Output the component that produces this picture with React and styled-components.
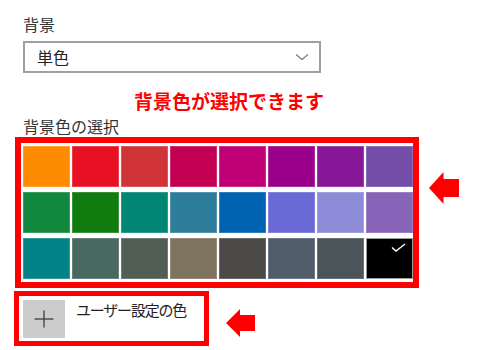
import React from 'react';
import styled, {createGlobalStyle} from "styled-components";

const GlobalStyle = createGlobalStyle`
    body {
        margin: 0;
        background: #fff;
        font-family: "Noto Sans CJK JP", "Noto Sans", sans-serif;
        color: #222;
    }
`;

const Page = styled.div`
    width: 500px;
    height: 350px;
    padding: 14px 0 0 23px;
    box-sizing: border-box;
    overflow: hidden;
`;

const Label = styled.div`
    font-size: 16px;
    line-height: 20px;
    color: #333;
`;

const Select = styled.div`
    margin-top: 7px;
    width: 298px;
    height: 32px;
    box-sizing: border-box;
    border: 2px solid #a0a0a0;
    display: flex;
    align-items: center;
    justify-content: space-between;
    padding: 0 10px 0 12px;
    font-size: 16px;
    color: #222;
`;

const Note = styled.div`
    margin: 16px 0 3px 111px;
    font-size: 19px;
    line-height: 24px;
    font-weight: bold;
    color: #ff0000;
`;

const Row = styled.div`
    display: flex;
    align-items: flex-start;
    margin-top: ${p => p.$top || 0}px;
`;

const Highlight = styled.div`
    margin-left: -${p => p.$pull}px;
    border: ${p => p.$border}px solid #ff0000;
    padding: ${p => p.$pad};
`;

const Swatches = styled.div`
    display: grid;
    grid-template-columns: repeat(8, 47px);
    grid-auto-rows: 41px;
    column-gap: 2px;
    row-gap: 5px;
`;

const Swatch = styled.div`
    position: relative;
    background: ${p => p.$color};
    box-shadow: inset 0 0 0 1px ${p => p.$selected ? '#9a9a9a' : 'rgba(255,255,255,0.18)'};
`;

const Check = styled.svg`
    position: absolute;
    top: 5px;
    right: 7px;
`;

const Arrow = styled.svg`
    margin-left: ${p => p.$left}px;
    margin-top: ${p => p.$top}px;
    flex: none;
`;

const Custom = styled.div`
    display: flex;
    align-items: flex-start;
    gap: 11px;
    font-size: 15px;
    line-height: 20px;
    letter-spacing: -1.2px;
    color: #222;
`;

const PlusBox = styled.div`
    width: 42px;
    height: 38px;
    background: #cccccc;
    display: flex;
    align-items: center;
    justify-content: center;
`;

const colors = [
    '#FF8C00', '#E81123', '#D13438', '#C30052', '#BF0077', '#9A0089', '#881798', '#744DA9',
    '#10893E', '#107C10', '#018574', '#2D7D9A', '#0063B1', '#6B69D6', '#8E8CD8', '#8764B8',
    '#038387', '#486860', '#525E54', '#7E735F', '#4C4A48', '#515C6B', '#4A5459', '#000000',
];

function RedArrow({width, height, left, top}) {
    return (
        <Arrow $left={left} $top={top} width={width} height={height} viewBox="0 0 30 30" preserveAspectRatio="none">
            <polygon points="0,15 14.5,0 14.5,6.5 30,6.5 30,23.5 14.5,23.5 14.5,30" fill="#ff0000"/>
        </Arrow>
    )
}

export default function App() {
    return (
        <Page>
            <GlobalStyle/>
            <Label>背景</Label>
            <Select>
                <span>単色</span>
                <svg width="14" height="8" viewBox="0 0 14 8">
                    <polyline points="1,1.5 7,6.5 13,1.5" fill="none" stroke="#777" strokeWidth="1.1"/>
                </svg>
            </Select>
            <Note>背景色が選択できます</Note>
            <Label>背景色の選択</Label>
            <Row $top={1}>
                <Highlight $pull={8} $border={6} $pad="3px 0 3px 2px">
                    <Swatches>
                        {colors.map((c, i) => (
                            <Swatch key={i} $color={c} $selected={i === colors.length - 1}>
                                {i === colors.length - 1 &&
                                    <Check width="15" height="9" viewBox="0 0 15 9">
                                        <polyline points="1,4.5 5,8 14,1" fill="none" stroke="#fff" strokeWidth="1.4"/>
                                    </Check>
                                }
                            </Swatch>
                        ))}
                    </Swatches>
                </Highlight>
                <RedArrow width={30} height={32} left={10} top={35}/>
            </Row>
            <Row $top={3}>
                <Highlight $pull={9} $border={5} $pad="4px 18px 3px 4px">
                    <Custom>
                        <PlusBox>
                            <svg width="20" height="18" viewBox="0 0 20 18">
                                <line x1="0.5" y1="9" x2="19.5" y2="9" stroke="#333" strokeWidth="1.2"/>
                                <line x1="10" y1="0.5" x2="10" y2="17.5" stroke="#333" strokeWidth="1.2"/>
                            </svg>
                        </PlusBox>
                        <span>ユーザー設定の色</span>
                    </Custom>
                </Highlight>
                <RedArrow width={29} height={28} left={17} top={18}/>
            </Row>
        </Page>
    )
}
